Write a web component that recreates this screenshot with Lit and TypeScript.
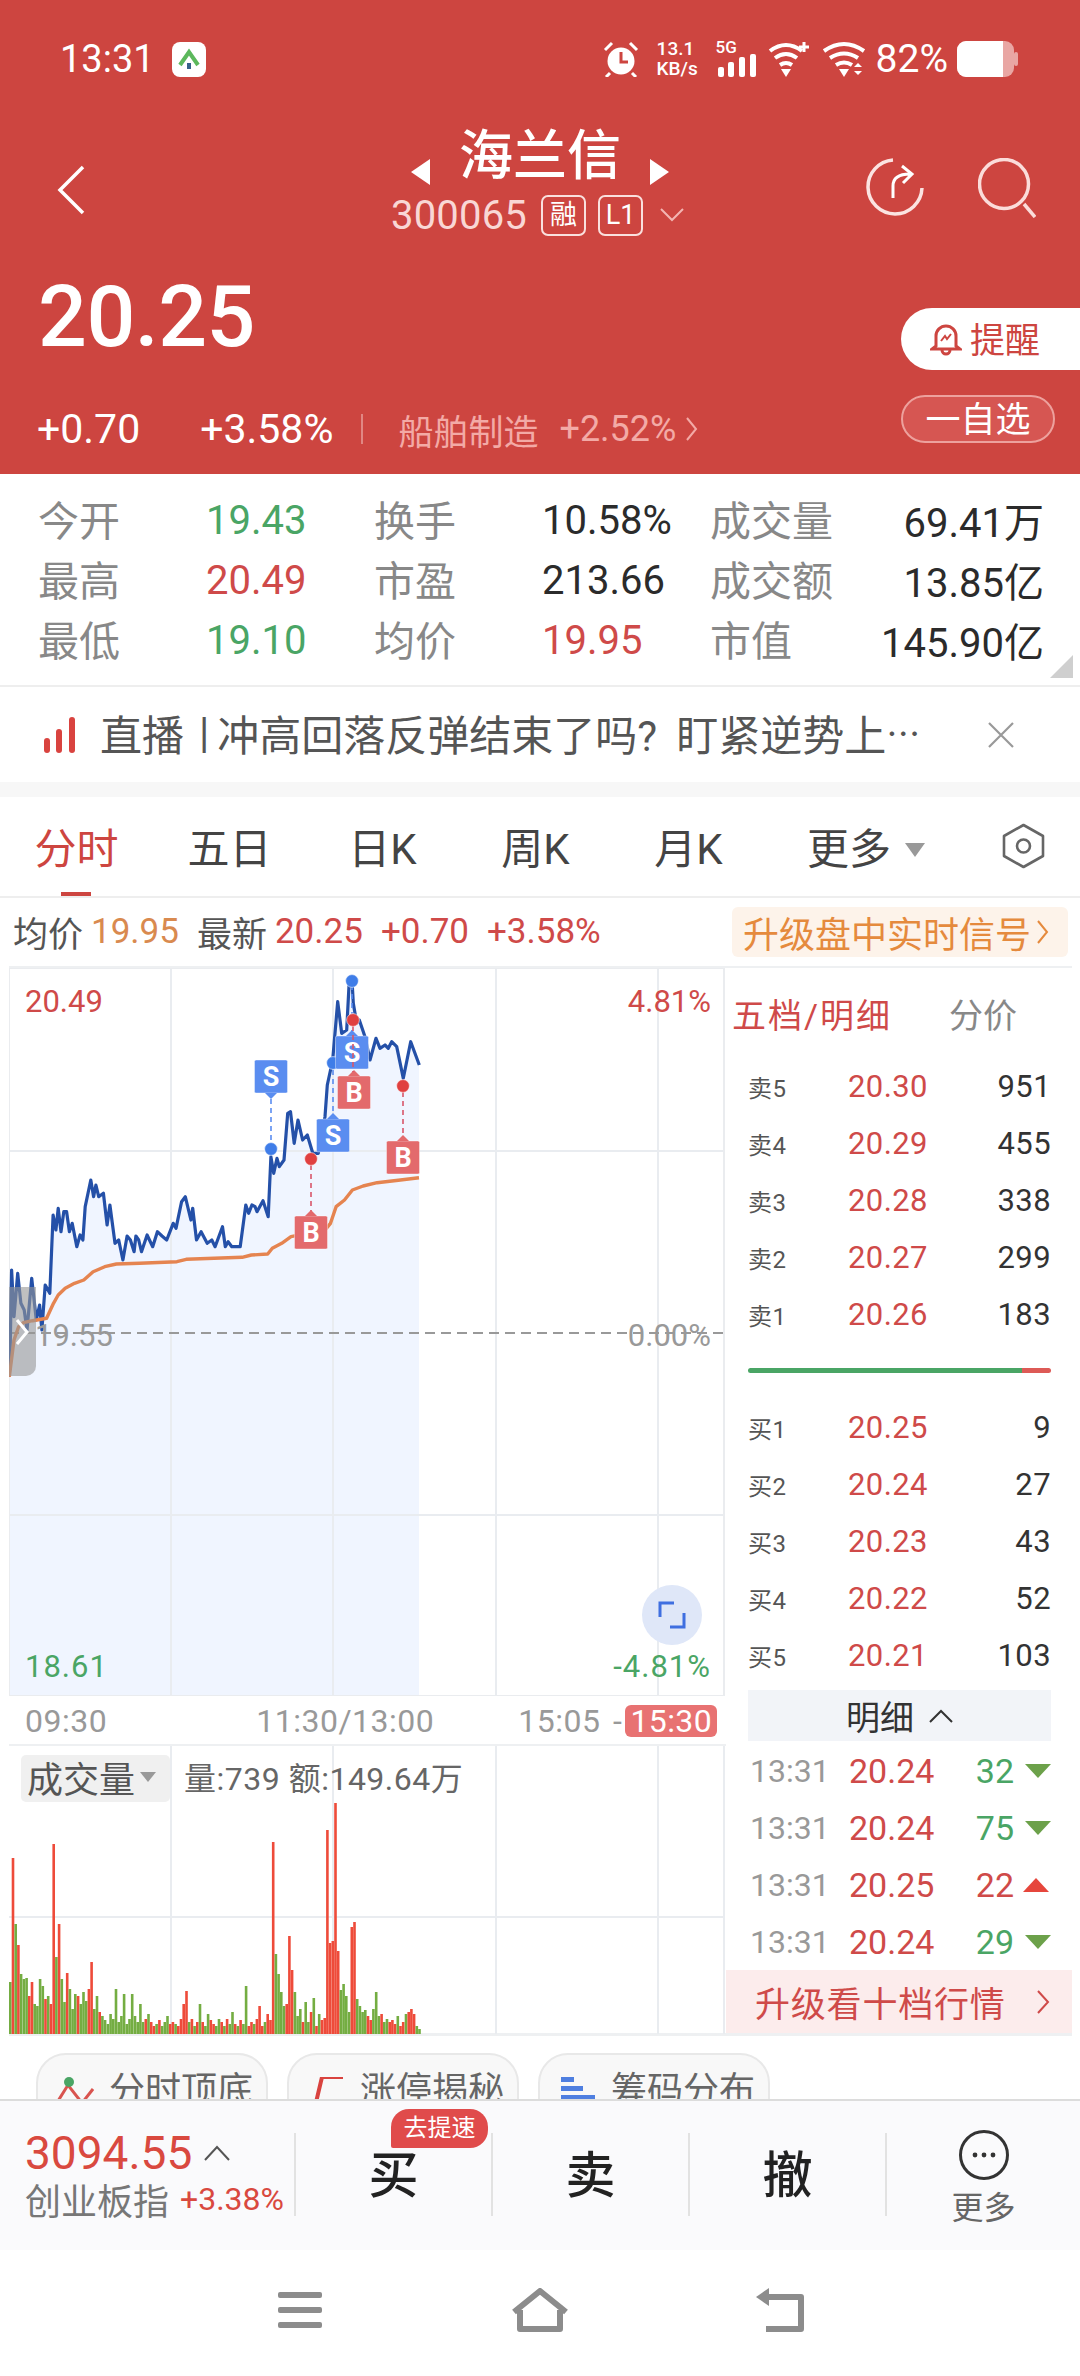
import { LitElement, html, css, svg } from "lit";
import { customElement } from "lit/decorators.js";

type P = [number, number];
const z3 = (a: number[][]): P[] => a.map(([x, y]) => [x / 2.148, 950 + y / 3] as P);
const z8 = (a: number[][]): P[] => a.map(([x, y]) => [240 + x / 3, 960 + y / 3] as P);

const pricePts: P[] = [
  ...z3([[20,1280],[22,1190],[25,960],[30,1100],[38,970],[45,1060],[52,1080],[58,1140],[68,985],[78,1110],[85,1065],[90,1140],[97,1005],[107,1030],[114,795],[120,840],[125,775],[131,845],[137,785],[143,785],[149,845],[155,820],[165,890],[172,855],[178,870],[183,770],[195,690],[201,740],[206,705],[212,740],[222,730],[230,825],[236,765],[247,880],[255,870],[264,930],[273,858],[280,870],[288,905],[292,858],[298,870],[304,905],[316,855],[328,890],[338,845],[348,858],[358,870],[372,820],[378,835],[390,755],[398,740],[410,810],[414,775],[422,870],[432,845],[445,880],[455,870],[462,890],[478,830],[484,890],[490,875],[498,890],[516,890],[528,765],[534,790],[541,765],[548,770],[552,785],[565,752],[576,800],[582,620],[588,670],[595,625],[600,650],[610,630],[618,490],[624,485],[632,580],[640,510],[650,570],[660,555],[672,610]]),
  ...z8([[235,580],[255,470],[262,375],[278,300],[293,125],[305,220],[320,210],[328,60],[336,60],[340,130],[350,190],[358,180],[375,230],[390,300],[408,235],[420,265],[435,255],[445,265],[455,245],[470,260],[490,355],[512,245],[538,315]]),
];
const avgPts: P[] = z3([[20,1280],[30,1170],[40,1130],[50,1118],[70,1112],[100,1105],[115,1060],[125,1035],[140,1015],[160,1000],[180,990],[200,965],[225,950],[250,942],[300,940],[380,935],[400,928],[520,922],[540,915],[575,912],[585,895],[605,880],[625,860],[660,850],[695,845],[710,820],[722,770],[740,750],[757,720],[780,708],[810,698],[860,690],[900,683]]);
const toPath = (p: P[]) => p.map(([x, y], i) => `${i ? "L" : "M"}${x.toFixed(1)} ${y.toFixed(1)}`).join("");

const vols = [
  -52,176,-110,89,-60,-55,-56,38,52,-30,
  -28,-55,-48,35,-38,30,190,-77,110,-55,
  -32,61,-45,-25,-40,38,-30,-42,-33,45,
  72,-25,-38,22,-18,-14,-10,-20,-15,-45,
  -12,-18,-40,-10,-15,-40,-18,-12,-30,-12,
  15,-20,12,8,-10,14,-8,-12,-18,10,
  12,-10,8,15,30,43,-12,15,-8,12,
  -30,12,-8,-20,14,10,-8,-15,12,-8,
  15,-10,-22,10,-8,14,-10,-48,8,12,
  -10,15,28,8,-12,20,14,192,-80,-60,
  -42,-28,30,98,64,-42,-18,-25,12,-32,
  -12,22,-36,8,-20,14,16,204,91,93,
  231,83,-44,-50,-38,-22,107,112,-35,-28,
  -22,-24,18,14,-25,-42,-18,20,-12,-15,
  12,14,10,-18,8,12,-20,22,25,20,-8,-5,
];

const sell = [["卖5","20.30","951"],["卖4","20.29","455"],["卖3","20.28","338"],["卖2","20.27","299"],["卖1","20.26","183"]];
const buy = [["买1","20.25","9"],["买2","20.24","27"],["买3","20.23","43"],["买4","20.22","52"],["买5","20.21","103"]];
const ticks = [["20.24","32",false],["20.24","75",false],["20.25","22",true],["20.24","29",false]] as [string,string,boolean][];

const sMark = (x: number, y: number, dir: "up" | "down", letter: string) => {
  const blue = letter === "S";
  const fill = blue ? "#5a8df0" : "#e36a6c";
  const w = 33, h = 33;
  const tip = dir === "down"
    ? `M${x - 6} ${y + h}L${x} ${y + h + 6}L${x + 6} ${y + h}Z`
    : `M${x - 6} ${y}L${x} ${y - 6}L${x + 6} ${y}Z`;
  return svg`<rect x=${x - w / 2} y=${y} width=${w} height=${h} rx="1.5" fill=${fill} stroke="#fff" stroke-opacity=".5" stroke-width=".8"/>
    <path d=${tip} fill=${fill}/>
    <text class="mk" x=${x} y=${y + 26} text-anchor="middle">${letter}</text>`;
};
const stem = (x: number, y1: number, y2: number, c: string) =>
  svg`<line x1=${x} x2=${x} y1=${y1} y2=${y2} stroke=${c} stroke-width="1.6" stroke-dasharray="5 4"/>`;
const dot = (x: number, y: number, c: string) =>
  svg`<circle cx=${x} cy=${y} r="6.4" fill=${c} stroke="#fff" stroke-opacity=".7" stroke-width=".8"/>`;

@customElement("app-root")
export class AppRoot extends LitElement {
  static styles = css`
    :host { display: block; width: 1080px; height: 2376px; overflow: hidden; background: #fff; font-family: Roboto, "Noto Sans CJK SC", sans-serif; color: #333; }
    svg { display: block; }
    .header { height: 474px; background: #cd4540; color: #fff; display: flex; flex-direction: column; }
    .status { height: 118px; display: flex; align-items: center; padding: 0 62px 0 60px; }
    .time { font-size: 38px; line-height: 44px; }
    .appicon { width: 34px; height: 35px; margin-left: 17px; }
    .status-r { margin-left: auto; display: flex; align-items: center; }
    .speed { font-size: 19px; line-height: 20px; font-weight: 500; text-align: left; width: 42px; margin: 0 17px 0 18px; white-space: nowrap; }
    .sig { width: 42px; height: 36px; display: flex; flex-direction: column; font-size: 17px; font-weight: 500; line-height: 13px; }
    .wifi1 { width: 42px; height: 36px; margin-left: 10px; }
    .wifi2 { width: 44px; height: 36px; margin-left: 12px; }
    .batt-t { font-size: 39px; margin-left: 10px; }
    .batt { width: 61px; height: 36px; margin-left: 9px; }
    .navrow { height: 122px; display: grid; grid-template-columns: 300px 1fr 300px; }
    .back { padding: 47px 0 0 56px; }
    .center { display: flex; flex-direction: column; align-items: center; padding: 8px 5px 0 0; }
    .titlerow { height: 60px; display: flex; align-items: center; gap: 29px; padding-left: 5px; }
    .titlerow svg { margin-top: 32px; }
    .title { font-size: 54px; line-height: 60px; font-weight: 500; margin-top: 2px; }
    .coderow { margin-top: 7px; height: 44px; display: flex; align-items: center; color: #f9d7d5; }
    .code { font-size: 40px; letter-spacing: .2px; }
    .tag { box-sizing: border-box; width: 45px; height: 41px; border: 2px solid #fae0de; border-radius: 7px; font-size: 27px; line-height: 37px; text-align: center; margin-left: 12px; color: #fff; }
    .tag.first { margin-left: 14px; }
    .chev-d { margin-left: 17px; }
    .acts { display: flex; justify-content: flex-end; padding: 40px 44px 0 0; gap: 54px; }
    .low { flex: 1; display: flex; justify-content: space-between; }
    .price { margin: 27px 0 0 38px; font-size: 86px; line-height: 100px; font-weight: 500; letter-spacing: -.5px; }
    .chg { margin: 40px 0 0 37px; height: 44px; display: flex; align-items: center; font-size: 41px; white-space: nowrap; }
    .chg .b { margin-left: 60px; }
    .vsep { width: 2px; height: 30px; background: #e18783; margin: 0 35px 0 28px; }
    .sec { color: #f3aaa6; font-size: 35px; }
    .sec-v { color: #f3aaa6; font-size: 36px; margin-left: 21px; }
    .secchev { margin-left: 9px; }
    .rbtns { width: 179px; padding-top: 68px; }
    .remind { height: 62px; background: #fff; border-radius: 31px 0 0 31px; display: flex; align-items: center; padding-left: 29px; gap: 8px; color: #cd4540; font-size: 35px; }
    .remind span { padding-bottom: 4px; }
    .fav { box-sizing: border-box; margin-top: 25px; width: 154px; height: 48px; border: 2px solid #eda19d; border-radius: 24px; background: #d65652; font-size: 35px; line-height: 47px; text-align: center; }

    .stats { position: relative; box-sizing: border-box; height: 213px; padding: 16px 36px 0 38px; border-bottom: 2px solid #eee; display: grid; grid-template-columns: 336px 336px 1fr; grid-auto-rows: 60px; }
    .cell { display: flex; align-items: center; }
    .lb { width: 168px; flex: none; font-size: 41px; color: #888; padding-bottom: 4px; }
    .cell.last .lb { width: auto; }
    .cell.last .val { margin-left: auto; }
    .val { font-size: 40px; color: #2b2b2b; white-space: nowrap; }
    .g { color: #4aa565; } .r { color: #cf4a49; }
    .corner { position: absolute; right: 7px; bottom: 7px; width: 23px; height: 23px; background: #cfcfcf; clip-path: polygon(100% 0, 100% 100%, 0 100%); }

    .news { height: 95px; display: flex; align-items: center; padding-left: 44px; }
    .news-t { font-size: 42px; color: #555; margin-left: 25px; white-space: pre; width: 880px; padding-bottom: 4px; display: flex; align-items: center; }
    .news-t .pipe { margin: 0 8px 0 15px; }
    .news-t .q { margin-right: 19px; }
    .news-t i { font-style: normal; font-family: "Noto Sans CJK SC", sans-serif; font-size: 34px; }
    .gap { height: 15px; background: #f7f7f7; }

    .tabs { box-sizing: border-box; height: 101px; display: flex; align-items: center; border-bottom: 2px solid #eee; padding-bottom: 2px; }
    .tab { position: relative; width: 153px; text-align: center; font-size: 42px; color: #444; height: 97px; line-height: 105px; }
    .tab.on { color: #cd4540; }
    .tab.on::after { content: ""; position: absolute; left: 61px; top: 95px; width: 30px; height: 4px; background: #cd4540; }
    .tab.more { width: 200px; display: flex; align-items: center; padding: 8px 0 0 42px; box-sizing: border-box; }
    .caret { margin-left: 14px; width: 0; height: 0; border-left: 10px solid transparent; border-right: 10px solid transparent; border-top: 14px solid #999; }
    .hex { margin-left: auto; margin-right: 34px; }

    .info { height: 70px; display: flex; align-items: center; padding-left: 13px; font-size: 35px; white-space: nowrap; padding-bottom: 3px; box-sizing: border-box; }
    .info .k { color: #555; font-size: 35px; }
    .info .o { color: #d98a4f; margin-left: 8px; }
    .info .n { margin-left: 18px; }
    .info .v { color: #cf4a49; margin-left: 8px; }
    .info .w { color: #cf4a49; margin-left: 18px; }
    .upg { margin-left: auto; margin-right: 12px; height: 50px; width: 336px; box-sizing: border-box; background: #fdf3ea; border-radius: 6px; color: #e58a3d; font-size: 36px; display: flex; align-items: center; padding-left: 11px; gap: 5px; }

    .main { margin: -2px 8px 0 9px; height: 1070px; box-sizing: border-box; border-top: 2px solid #eef0f2; border-bottom: 3px solid #eef0f2; display: flex; }
    .left { width: 717px; flex: none; }
    .chart { position: relative; height: 728px; }
    .chart > svg, .volume > svg { position: absolute; left: 0; top: 0; }
    .mk { font: 700 27px Roboto, sans-serif; fill: #fff; }
    .lbl { position: absolute; font-size: 31px; line-height: 36px; }
    .l1 { left: 16px; top: 16px; color: #cf4a49; }
    .l2 { right: 15px; top: 16px; color: #cf4a49; }
    .l3 { left: 26px; top: 350px; color: #999; }
    .l4 { right: 15px; top: 350px; color: #999; }
    .l5 { left: 16px; top: 681px; color: #4aa565; letter-spacing: 1px; }
    .l6 { right: 15px; top: 681px; color: #4aa565; letter-spacing: 1px; }
    .expand { position: absolute; left: 633px; top: 617px; width: 60px; height: 60px; border-radius: 50%; background: #dfe7f8; display: flex; align-items: center; justify-content: center; }
    .handle { position: absolute; left: 0; top: 319px; width: 27px; height: 89px; background: rgba(150,150,150,.6); border-radius: 0 0 10px 0; }
    .handle svg { margin: 32px 0 0 6px; }
    .times { box-sizing: border-box; height: 50px; display: flex; align-items: center; padding: 2px 0 0 16px; font-size: 32px; color: #999; letter-spacing: .5px; word-spacing: 4px; border-bottom: 2px solid #eef0f2; white-space: nowrap; }
    .t2 { margin-left: 149px; }
    .t3 { margin-left: 84px; }
    .badge { margin-left: 3px; width: 92px; height: 32px; line-height: 33px; background: #e87272; color: #fff; text-align: center; border-radius: 6px; letter-spacing: .4px; }
    .volume { position: relative; height: 288px; }
    .vhead { position: absolute; left: 12px; top: 7px; display: flex; align-items: center; }
    .vchip { box-sizing: border-box; width: 149px; height: 47px; background: #f0f0f0; border-radius: 5px; display: flex; align-items: center; padding: 0 0 3px 6px; font-size: 36px; color: #555; }
    .vchip .caret { margin-left: 5px; border-left-width: 8px; border-right-width: 8px; border-top-width: 10px; }
    .vtxt { margin-left: 14px; font-size: 32px; color: #666; white-space: nowrap; letter-spacing: .5px; padding-bottom: 4px; }

    .right { flex: 1; display: flex; flex-direction: column; min-width: 0; }
    .rhead { height: 90px; display: flex; align-items: center; padding-left: 6px; font-size: 34px; white-space: nowrap; }
    .rhead .a { color: #cf4a49; letter-spacing: 2px; }
    .rhead .c { color: #888; margin-left: 57px; }
    .row { height: 57px; margin: 0 21px 0 22px; display: grid; grid-template-columns: 100px 1fr auto; align-items: center; }
    .row .n { font-size: 24px; color: #555; letter-spacing: .5px; }
    .row .p { font-size: 31px; color: #cf4a49; letter-spacing: .4px; }
    .row .q { font-size: 31px; color: #333; letter-spacing: .4px; }
    .ratio { margin: 25px 21px 26px 22px; height: 5px; border-radius: 3px; background: linear-gradient(90deg, #4aa565 0 90.5%, #dd5a56 90.5%); }
    .mx { margin: 6px 21px 1px 22px; height: 51px; background: #f2f4f8; display: flex; align-items: center; justify-content: center; gap: 15px; font-size: 34px; color: #333; }
    .tick { height: 57px; margin: 0 21px 0 24px; display: grid; grid-template-columns: 99px 1fr auto 37px; align-items: center; font-size: 34px; }
    .tick .tm { color: #999; font-size: 32px; }
    .tick .pr { color: #cf4a49; }
    .tri-d { justify-self: end; width: 0; height: 0; border-left: 13px solid transparent; border-right: 13px solid transparent; border-top: 14px solid #6ca14a; }
    .tri-u { justify-self: end; margin-right: 2px; width: 0; height: 0; border-left: 13px solid transparent; border-right: 13px solid transparent; border-bottom: 14px solid #e6463c; }
    .upten { flex: 1; background: #fcecec; display: flex; align-items: center; padding-left: 29px; font-size: 35px; color: #cf4a49; letter-spacing: .8px; }
    .upten svg { margin-left: 30px; }

    .chips { height: 63px; box-sizing: border-box; overflow: hidden; padding: 17px 0 0 36px; display: flex; gap: 19px; }
    .chip { box-sizing: border-box; width: 232px; height: 80px; flex: none; background: #f8f8f8; border: 2px solid #e8e8e8; border-radius: 30px; display: flex; padding: 6px 0 0 18px; font-size: 36px; color: #666; gap: 15px; }
    .chip svg { margin-top: 16px; }

    .bar { box-sizing: border-box; height: 151px; border-top: 2px solid #dcdcdc; background: #fafafc; display: flex; padding-top: 32px; align-items: flex-start; }
    .idx { width: 294px; flex: none; box-sizing: border-box; padding-left: 25px; height: 83px; white-space: nowrap; }
    .idx1 { height: 46px; display: flex; align-items: center; margin-top: -3px; color: #d9493f; font-size: 46px; gap: 12px; }
    .idx2 { height: 46px; display: flex; align-items: center; font-size: 36px; color: #777; }
    .idx2 span { color: #d9493f; font-size: 32px; margin-left: 11px; }
    .act { position: relative; width: 197px; flex: none; height: 83px; border-left: 2px solid #e2e2e2; box-sizing: border-box; text-align: center; font-size: 50px; line-height: 86px; color: #222; font-weight: 500; }
    .quick { position: absolute; left: 95px; top: -24px; width: 97px; height: 39px; background: #e04b4b; border-radius: 18px 18px 18px 2px; color: #fff; font-size: 24px; line-height: 39px; font-weight: 400; }
    .act.moreb { width: auto; flex: 1; display: flex; flex-direction: column; align-items: center; font-size: 32px; line-height: 40px; color: #666; font-weight: 400; }
    .act.moreb svg { margin: -3px 0 8px; flex: none; }
    .act.moreb span { flex: none; }

    .nav { height: 126px; display: flex; justify-content: center; align-items: center; padding-bottom: 7px; box-sizing: border-box; }
    .nav div { width: 240px; display: flex; justify-content: center; }
  `;

  private renderChart() {
    const grid = [171, 333, 496, 658];
    const hs = [1151, 1515];
    return svg`<svg width="717" height="728" viewBox="9 968 717 728">
      <path d=${toPath(pricePts) + "L419 " + pricePts[pricePts.length - 1][1] + "L419 1696L9 1696Z"} fill="#f0f5ff"/>
      ${grid.map(x => svg`<line x1=${x} x2=${x} y1="968" y2="1696" stroke="#e9ecf0" stroke-width="2"/>`)}
      ${hs.map(y => svg`<line x1="9" x2="724" y1=${y} y2=${y} stroke="#e9ecf0" stroke-width="2"/>`)}
      <rect x="9" y="968" width="715" height="728" fill="none" stroke="#eaecef" stroke-width="2"/>
      <line x1="9" x2="724" y1="1333" y2="1333" stroke="#999" stroke-width="2" stroke-dasharray="10 6"/>
      <path d=${toPath(pricePts)} fill="none" stroke="#2450a8" stroke-width="3.2" stroke-linejoin="round"/>
      <path d=${toPath(avgPts)} fill="none" stroke="#e58450" stroke-width="3.4" stroke-linejoin="round"/>
      ${stem(271, 1099, 1149, "#5a8df0")}${dot(271, 1149, "#3f7de8")}
      ${stem(311, 1165, 1212, "#d9566a")}${dot(311, 1159, "#e04040")}
      ${stem(333, 1070, 1114, "#5a8df0")}${dot(333, 1063, "#3f7de8")}
      ${stem(352, 985, 1036, "#5a8df0")}${dot(352, 981, "#3f7de8")}
      ${sMark(271, 1060, "down", "S")}
      ${sMark(311, 1216, "up", "B")}
      ${sMark(333, 1119, "up", "S")}
      ${sMark(354, 1076, "up", "B")}
      ${sMark(352, 1036, "up", "S")}
      ${stem(353, 1026, 1072, "#d9566a")}${dot(353, 1020, "#e04040")}
      ${stem(403, 1092, 1136, "#d9566a")}${dot(403, 1086, "#e04040")}
      ${sMark(403, 1141, "up", "B")}
    </svg>`;
  }

  private renderVolume() {
    const grid = [171, 333, 496, 658];
    return svg`<svg width="717" height="288" viewBox="9 1746 717 288">
      ${grid.map(x => svg`<line x1=${x} x2=${x} y1="1746" y2="2034" stroke="#e9ecf0" stroke-width="2"/>`)}
      <line x1="9" x2="724" y1="1917" y2="1917" stroke="#e9ecf0" stroke-width="2"/>
      <line x1="724" x2="724" y1="1746" y2="2034" stroke="#e9ecf0" stroke-width="2"/>
      ${vols.map((v, i) => svg`<rect x=${(9 + i * 2.71).toFixed(1)} y=${2034 - Math.abs(v)} width="2.6" height=${Math.abs(v)} fill=${v > 0 ? "#ee4b3a" : "#74ad42"}/>`)}
    </svg>`;
  }

  private stat(l: string, v: string, c = "", last = false) {
    return html`<div class="cell ${last ? "last" : ""}"><span class="lb">${l}</span><span class="val ${c}">${v}</span></div>`;
  }

  render() {
    return html`
      <div class="header">
        <div class="status">
          <span class="time">13:31</span>
          <svg class="appicon" viewBox="0 0 34 35"><rect width="34" height="35" rx="8" fill="#fff"/><path d="M8 23L17 10L26 23" fill="none" stroke="#5cb85c" stroke-width="4"/><rect x="15" y="21" width="4" height="6" fill="#37618a"/></svg>
          <div class="status-r">
            <svg width="36" height="36" viewBox="0 0 36 36"><circle cx="18" cy="20" r="13.5" fill="#fff"/><path d="M18 11v10h7" fill="none" stroke="#cd4540" stroke-width="3"/><path d="M2 9L9 2M34 9L27 2M7 32l-4 4M29 32l4 4" stroke="#fff" stroke-width="3" fill="none"/></svg>
            <div class="speed">13.1<br>KB/s</div>
            <div class="sig"><span>5G</span><svg width="42" height="23" viewBox="0 0 42 23"><g fill="#fff"><rect x="2" y="13" width="6" height="10" rx="2"/><rect x="12" y="8" width="6" height="15" rx="2"/><rect x="23" y="3" width="6" height="20" rx="2"/><rect x="34" y="0" width="6" height="23" rx="2"/></g></svg></div>
            <svg class="wifi1" viewBox="0 0 42 36"><g fill="none" stroke="#fff" stroke-width="4"><path d="M2 10Q18 -2 34 10M7 17Q18 9 29 17M12 24Q18 20 24 24"/><path d="M36 1v10M31 6h10" stroke-width="3"/></g><path d="M13 28h10l-5 8z" fill="#fff"/></svg>
            <svg class="wifi2" viewBox="0 0 44 36"><g fill="none" stroke="#fff" stroke-width="4"><path d="M2 10Q22 -4 42 10M8 17Q22 8 36 17M14 24Q22 19 30 24"/></g><path d="M17 28h10l-5 8z" fill="#fff"/><path d="M32 26l4-4 4 4zM32 30l4 4 4-4z" fill="#fff"/></svg>
            <span class="batt-t">82%</span>
            <svg class="batt" viewBox="0 0 61 36"><rect width="57" height="36" rx="9" fill="#e9a6a3"/><rect x="57" y="11" width="4" height="14" rx="2" fill="#e9a6a3"/><path d="M9 0H46V36H9A9 9 0 0 1 0 27V9A9 9 0 0 1 9 0Z" fill="#fff"/></svg>
          </div>
        </div>
        <div class="navrow">
          <div class="back"><svg width="30" height="50" viewBox="0 0 30 50"><path d="M27 2L4 25L27 48" fill="none" stroke="#fff" stroke-width="3.5"/></svg></div>
          <div class="center">
            <div class="titlerow">
              <svg width="19" height="26" viewBox="0 0 19 26"><path d="M19 0V26L0 13Z" fill="#fff"/></svg>
              <span class="title">海兰信</span>
              <svg width="19" height="26" viewBox="0 0 19 26"><path d="M0 0V26L19 13Z" fill="#fff"/></svg>
            </div>
            <div class="coderow">
              <span class="code">300065</span><span class="tag first">融</span><span class="tag">L1</span>
              <svg class="chev-d" width="24" height="14" viewBox="0 0 24 14"><path d="M1 1L12 12L23 1" fill="none" stroke="#f3b5b2" stroke-width="2"/></svg>
            </div>
          </div>
          <div class="acts">
            <svg width="58" height="60" viewBox="0 0 58 60"><path d="M27 2A27 27 0 1 0 56 30" fill="none" stroke="#fbe3e1" stroke-width="3.5"/><path d="M27 40V28Q27 16 44 16M36 8L46 16L37 25" fill="none" stroke="#fff" stroke-width="3"/></svg>
            <svg width="58" height="60" viewBox="0 0 58 60"><circle cx="26" cy="26" r="24.5" fill="none" stroke="#fbdcda" stroke-width="3.5"/><path d="M46 46L57 59" stroke="#fbdcda" stroke-width="3.5"/></svg>
          </div>
        </div>
        <div class="low">
          <div>
            <div class="price">20.25</div>
            <div class="chg"><span>+0.70</span><span class="b">+3.58%</span><i class="vsep"></i><span class="sec">船舶制造</span><span class="sec-v">+2.52%</span>
              <svg class="secchev" width="13" height="26" viewBox="0 0 13 26"><path d="M2 2L11 13L2 24" fill="none" stroke="#f3aaa6" stroke-width="2"/></svg>
            </div>
          </div>
          <div class="rbtns">
            <div class="remind">
              <svg width="32" height="34" viewBox="0 0 32 34"><path d="M6 24V14A10 10 0 0 1 26 14V24L30 27H2ZM12 28a4 4 0 0 0 8 0" fill="none" stroke="#cd4540" stroke-width="3"/><path d="M11 19L15 14L17 17L21 12" fill="none" stroke="#cd4540" stroke-width="2"/></svg>
              <span>提醒</span>
            </div>
            <div class="fav">一自选</div>
          </div>
        </div>
      </div>

      <div class="stats">
        ${this.stat("今开", "19.43", "g")}${this.stat("换手", "10.58%")}${this.stat("成交量", "69.41万", "", true)}
        ${this.stat("最高", "20.49", "r")}${this.stat("市盈", "213.66")}${this.stat("成交额", "13.85亿", "", true)}
        ${this.stat("最低", "19.10", "g")}${this.stat("均价", "19.95", "r")}${this.stat("市值", "145.90亿", "", true)}
        <i class="corner"></i>
      </div>

      <div class="news">
        <svg width="31" height="36" viewBox="0 0 31 36"><g fill="#d9433f"><rect x="0" y="21" width="6" height="15" rx="3"/><rect x="12" y="12" width="6" height="24" rx="3"/><rect x="25" y="0" width="6" height="36" rx="3"/></g></svg>
        <span class="news-t"><span>直播</span><span class="pipe">|</span><span class="q">冲高回落反弹结束了吗?</span><span>盯紧逆势上</span><i>…</i></span>
        <svg width="28" height="28" viewBox="0 0 28 28" style="margin-left:7px"><path d="M2 2L26 26M26 2L2 26" stroke="#999" stroke-width="2.2"/></svg>
      </div>
      <div class="gap"></div>

      <div class="tabs">
        <div class="tab on">分时</div><div class="tab">五日</div><div class="tab">日K</div><div class="tab">周K</div><div class="tab">月K</div>
        <div class="tab more">更多<i class="caret"></i></div>
        <svg class="hex" width="45" height="46" viewBox="0 0 45 46"><path d="M22.5 2L42 13V33L22.5 44L3 33V13Z" fill="none" stroke="#666" stroke-width="2.6" stroke-linejoin="round"/><circle cx="22.5" cy="23" r="6.5" fill="none" stroke="#666" stroke-width="2.6"/></svg>
      </div>

      <div class="info">
        <span class="k">均价</span><span class="o">19.95</span>
        <span class="k n">最新</span><span class="v">20.25</span>
        <span class="w">+0.70</span><span class="w">+3.58%</span>
        <div class="upg"><span>升级盘中实时信号</span><svg width="13" height="26" viewBox="0 0 13 26"><path d="M2 2L11 13L2 24" fill="none" stroke="#e58a3d" stroke-width="2"/></svg></div>
      </div>

      <div class="main">
        <div class="left">
          <div class="chart">
            ${this.renderChart()}
            <span class="lbl l1">20.49</span><span class="lbl l2">4.81%</span>
            <span class="lbl l3">19.55</span><span class="lbl l4">0.00%</span>
            <span class="lbl l5">18.61</span><span class="lbl l6">-4.81%</span>
            <div class="handle"><svg width="14" height="26" viewBox="0 0 14 26"><path d="M2 1L12 13L2 25" fill="none" stroke="#fff" stroke-width="3"/></svg></div>
            <div class="expand"><svg width="28" height="28" viewBox="0 0 28 28"><path d="M2 16V2H16M26 12V26H12" fill="none" stroke="#3f6fe0" stroke-width="3"/></svg></div>
          </div>
          <div class="times"><span>09:30</span><span class="t2">11:30/13:00</span><span class="t3">15:05 -</span><span class="badge">15:30</span></div>
          <div class="volume">
            ${this.renderVolume()}
            <div class="vhead">
              <div class="vchip">成交量<i class="caret"></i></div>
              <span class="vtxt">量:739 额:149.64万</span>
            </div>
          </div>
        </div>
        <div class="right">
          <div class="rhead"><span class="a">五档/明细</span><span class="c">分价</span></div>
          ${sell.map(r => html`<div class="row"><span class="n">${r[0]}</span><span class="p">${r[1]}</span><span class="q">${r[2]}</span></div>`)}
          <div class="ratio"></div>
          ${buy.map(r => html`<div class="row"><span class="n">${r[0]}</span><span class="p">${r[1]}</span><span class="q">${r[2]}</span></div>`)}
          <div class="mx"><span>明细</span><svg width="24" height="14" viewBox="0 0 24 14"><path d="M1 13L12 2L23 13" fill="none" stroke="#333" stroke-width="2"/></svg></div>
          ${ticks.map(t => html`<div class="tick"><span class="tm">13:31</span><span class="pr">${t[0]}</span><span class="${t[2] ? "r" : "g"}">${t[1]}</span><i class="${t[2] ? "tri-u" : "tri-d"}"></i></div>`)}
          <div class="upten"><span>升级看十档行情</span><svg width="14" height="26" viewBox="0 0 14 26"><path d="M2 2L12 13L2 24" fill="none" stroke="#cf4a49" stroke-width="2"/></svg></div>
        </div>
      </div>

      <div class="chips">
        <div class="chip"><svg width="38" height="38" viewBox="0 0 38 38"><path d="M2 24L12 8L26 26L37 12" fill="none" stroke="#d9544f" stroke-width="3"/><circle cx="13" cy="5" r="5" fill="#4aa565"/></svg><span>分时顶底</span></div>
        <div class="chip"><svg width="38" height="38" viewBox="0 0 38 38"><path d="M3 34H7L15 0H36" fill="none" stroke="#d9433f" stroke-width="4"/></svg><span>涨停揭秘</span></div>
        <div class="chip"><svg width="38" height="38" viewBox="0 0 38 38"><g fill="#4f7fe0"><rect x="3" y="0" width="13" height="5"/><rect x="3" y="9" width="22" height="5"/><rect x="3" y="18" width="34" height="5"/></g></svg><span>筹码分布</span></div>
      </div>

      <div class="bar">
        <div class="idx">
          <div class="idx1"><span>3094.55</span><svg width="26" height="16" viewBox="0 0 26 16"><path d="M1 15L13 2L25 15" fill="none" stroke="#555" stroke-width="2"/></svg></div>
          <div class="idx2">创业板指<span>+3.38%</span></div>
        </div>
        <div class="act">买<span class="quick">去提速</span></div>
        <div class="act">卖</div>
        <div class="act">撤</div>
        <div class="act moreb">
          <svg width="50" height="50" viewBox="0 0 50 50"><circle cx="25" cy="25" r="23.5" fill="none" stroke="#333" stroke-width="3"/><g fill="#333"><circle cx="16" cy="25" r="2.4"/><circle cx="25" cy="25" r="2.4"/><circle cx="34" cy="25" r="2.4"/></g></svg>
          <span>更多</span>
        </div>
      </div>

      <div class="nav">
        <div><svg width="44" height="36" viewBox="0 0 44 36"><g fill="#8c8c8c"><rect width="44" height="6" rx="2"/><rect y="15" width="44" height="6" rx="2"/><rect y="30" width="44" height="6" rx="2"/></g></svg></div>
        <div><svg width="58" height="44" viewBox="0 0 58 44"><path d="M3 24L29 3L55 24M9 22V41H49V22" fill="none" stroke="#8c8c8c" stroke-width="6" stroke-linejoin="round"/></svg></div>
        <div><svg width="48" height="44" viewBox="0 0 48 44"><path d="M13 0V18L0 9Z" fill="#8c8c8c"/><path d="M12 9H45V41H10" fill="none" stroke="#8c8c8c" stroke-width="6" stroke-linejoin="round"/></svg></div>
      </div>
    `;
  }
}
